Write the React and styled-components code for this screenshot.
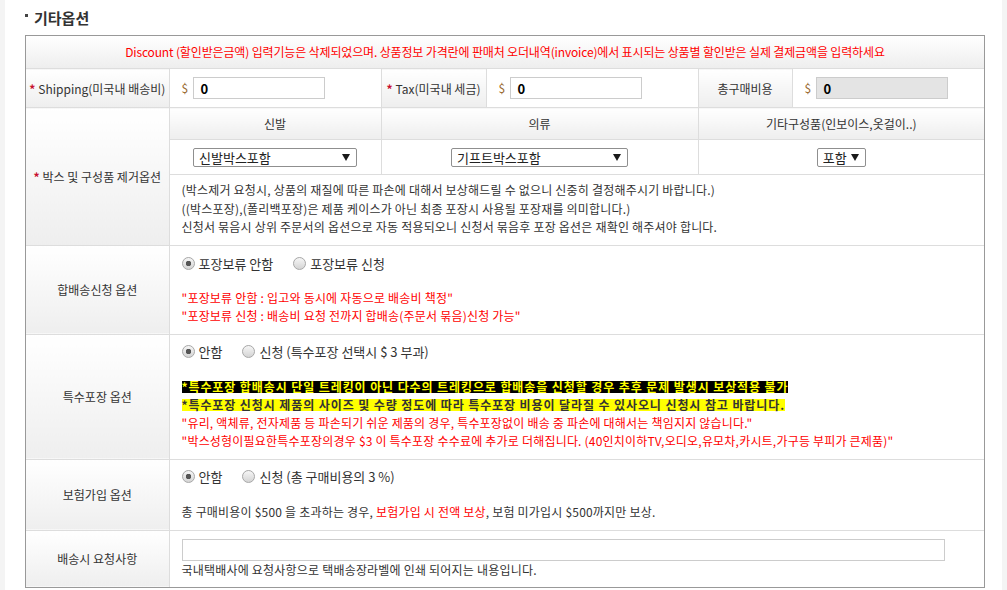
import styled, { createGlobalStyle } from "styled-components";

const GlobalStyle = createGlobalStyle`
  html, body {
    margin: 0;
    padding: 0;
    background: #fff;
  }
  body {
    font-family: "Noto Sans CJK KR", "Noto Sans", sans-serif;
    font-size: 12px;
    color: #333;
  }
`;

const Page = styled.div`
  display: flex;
  min-height: 590px;
`;

const Gutter = styled.div`
  flex: none;
  width: 5px;
  background: #f4f4f4;
`;

const Main = styled.main`
  flex: 1;
  padding: 9px 0 0 20px;
`;

const Title = styled.h3`
  margin: 0 0 9px;
  display: flex;
  align-items: center;
  gap: 6px;
  font-size: 15px;
  line-height: 17px;
  font-weight: bold;
  color: #333;

  &::before {
    content: "";
    width: 3px;
    height: 3px;
    margin-top: -4px;
    background: #444;
  }
`;

const TableBox = styled.div`
  width: 960px;
  box-sizing: border-box;
  border: 1px solid #999;
`;

const Table = styled.table`
  width: 100%;
  border-collapse: collapse;
  border-style: hidden;
  table-layout: fixed;
`;

const Label = styled.th`
  border: 1px solid #ddd;
  background: linear-gradient(#fff, #eee);
  padding: ${(p) => p.$pad || "0 2px"};
  font-weight: normal;
  font-size: 12px;
  line-height: 15px;
  text-align: center;
  vertical-align: middle;
  color: ${(p) => p.$color || "#333"};
  letter-spacing: ${(p) => p.$spacing || 0}px;
  white-space: nowrap;
`;

const Cell = styled.td`
  border: 1px solid #ddd;
  padding: ${(p) => p.$pad || "8px 12px 9px"};
  text-align: ${(p) => (p.$center ? "center" : "left")};
  vertical-align: ${(p) => (p.$middle ? "middle" : "top")};
  font-size: 12px;
  line-height: ${(p) => p.$lh || 18}px;
  letter-spacing: 0.2px;
  color: #333;
`;

const Star = styled.span`
  color: #c8102e;
  font-weight: bold;
  margin-right: 3px;
`;

const Money = styled.div`
  display: flex;
  align-items: center;
  gap: 5px;
`;

const Dollar = styled.span`
  color: #9a6b34;
  font-size: 12px;
`;

const Input = styled.input`
  box-sizing: border-box;
  width: ${(p) => p.$w || 132}px;
  height: 22px;
  margin: 0;
  padding: 0 6px;
  border: 1px solid #ccc;
  background: ${(p) => (p.disabled ? "#e4e4e4" : "#fff")};
  font: bold 13px "Noto Sans CJK KR", sans-serif;
  color: #000;
  outline: none;
`;

const WideInput = styled(Input)`
  display: block;
`;

const SelectWrap = styled.span`
  position: relative;
  display: inline-block;
  width: ${(p) => p.$w}px;
  vertical-align: top;
`;

const Select = styled.select`
  appearance: none;
  display: block;
  box-sizing: border-box;
  width: 100%;
  height: 19px;
  margin: 0;
  padding: 0 18px 0 5px;
  border: 1px solid #8f8f8f;
  border-radius: 2px;
  background: #fff;
  font: 13px "Noto Sans CJK KR", sans-serif;
  line-height: 17px;
  color: #222;
`;

const Arrow = styled.span`
  position: absolute;
  right: 7px;
  top: 6px;
  border-left: 4px solid transparent;
  border-right: 4px solid transparent;
  border-top: 7px solid #1a1a1a;
  pointer-events: none;
`;

const Line = styled.div`
  color: ${(p) => p.$color || "#333"};
  margin-top: ${(p) => p.$top || 0}px;
`;

const Red = styled.span`
  color: #f00;
`;

const Mark = styled.span`
  display: inline-block;
  line-height: 12px;
  font-weight: bold;
  letter-spacing: 0.9px;
  background: ${(p) => (p.$dark ? "#000" : "#ff0")};
  color: ${(p) => (p.$dark ? "#ff0" : "#333")};
`;

const RadioRow = styled.div`
  display: flex;
  align-items: center;
  gap: 20px;
  height: 18px;
  letter-spacing: 0;
`;

const Option = styled.label`
  display: inline-flex;
  align-items: center;
  gap: 4px;
  font-size: 13px;
  color: #333;
`;

const Radio = styled.input.attrs({ type: "radio" })`
  appearance: none;
  box-sizing: border-box;
  width: 13px;
  height: 13px;
  margin: 0;
  border: 1px solid #a8a8a8;
  border-radius: 50%;
  background: linear-gradient(#f6f6f6, #d4d4d4);

  &:checked {
    background: radial-gradient(circle, #555 0 2.5px, transparent 3px),
      linear-gradient(#f6f6f6, #d4d4d4);
  }
`;

const RadioGroup = ({ name, options }) => (
  <RadioRow>
    {options.map((o, i) => (
      <Option key={o}>
        <Radio name={name} defaultChecked={i === 0} />
        {o}
      </Option>
    ))}
  </RadioRow>
);

const Dropdown = ({ w, value }) => (
  <SelectWrap $w={w}>
    <Select defaultValue={value}>
      <option>{value}</option>
    </Select>
    <Arrow />
  </SelectWrap>
);

const MoneyCell = ({ disabled }) => (
  <Cell $pad="8px 12px" $middle>
    <Money>
      <Dollar>$</Dollar>
      <Input defaultValue="0" disabled={disabled} />
    </Money>
  </Cell>
);

export default function App() {
  return (
    <>
      <GlobalStyle />
      <Page>
        <Gutter />
        <Main>
          <Title>기타옵션</Title>
          <TableBox>
            <Table>
              <colgroup>
                <col style={{ width: 143 }} />
                <col style={{ width: 212 }} />
                <col style={{ width: 105 }} />
                <col style={{ width: 212 }} />
                <col style={{ width: 94 }} />
                <col />
              </colgroup>
              <tbody>
                <tr>
                  <Label colSpan={6} $pad="8px 0 9px" $color="#f00" $spacing={-0.15}>
                    Discount (할인받은금액) 입력기능은 삭제되었으며. 상품정보 가격란에 판매처 오더내역(invoice)에서 표시되는 상품별 할인받은 실제 결제금액을 입력하세요
                  </Label>
                </tr>
                <tr>
                  <Label>
                    <Star>*</Star>Shipping(미국내 배송비)
                  </Label>
                  <MoneyCell />
                  <Label>
                    <Star>*</Star>Tax(미국내 세금)
                  </Label>
                  <MoneyCell />
                  <Label>총구매비용</Label>
                  <MoneyCell disabled />
                </tr>
                <tr>
                  <Label rowSpan={3}>
                    <Star>*</Star>박스 및 구성품 제거옵션
                  </Label>
                  <Label $pad="8px 0">신발</Label>
                  <Label colSpan={2} $pad="8px 0">
                    의류
                  </Label>
                  <Label colSpan={2} $pad="8px 0">
                    기타구성품(인보이스,옷걸이..)
                  </Label>
                </tr>
                <tr>
                  <Cell $center $pad="8px 0 7px">
                    <Dropdown w={164} value="신발박스포함" />
                  </Cell>
                  <Cell $center colSpan={2} $pad="8px 0 7px">
                    <Dropdown w={177} value="기프트박스포함" />
                  </Cell>
                  <Cell $center colSpan={2} $pad="8px 0 7px">
                    <Dropdown w={49} value="포함" />
                  </Cell>
                </tr>
                <tr>
                  <Cell colSpan={5} $pad="6px 12px 8px" $lh={18.5}>
                    <Line>(박스제거 요청시, 상품의 재질에 따른 파손에 대해서 보상해드릴 수 없으니 신중히 결정해주시기 바랍니다.)</Line>
                    <Line>((박스포장),(폴리백포장)은 제품 케이스가 아닌 최종 포장시 사용될 포장재를 의미합니다.)</Line>
                    <Line>신청서 묶음시 상위 주문서의 옵션으로 자동 적용되오니 신청서 묶음후 포장 옵션은 재확인 해주셔야 합니다.</Line>
                  </Cell>
                </tr>
                <tr>
                  <Label>합배송신청 옵션</Label>
                  <Cell colSpan={5} $pad="9px 12px 9px">
                    <RadioGroup name="hold" options={["포장보류 안함", "포장보류 신청"]} />
                    <Line $top={16} $color="#f00">"포장보류 안함 : 입고와 동시에 자동으로 배송비 책정"</Line>
                    <Line $color="#f00">"포장보류 신청 : 배송비 요청 전까지 합배송(주문서 묶음)신청 가능"</Line>
                  </Cell>
                </tr>
                <tr>
                  <Label>특수포장 옵션</Label>
                  <Cell colSpan={5}>
                    <RadioGroup name="special" options={["안함", "신청 (특수포장 선택시 $ 3 부과)"]} />
                    <Line $top={17}>
                      <Mark $dark>*특수포장 합배송시 단일 트레킹이 아닌 다수의 트레킹으로 합배송을 신청할 경우 추후 문제 발생시 보상적용 불가</Mark>
                    </Line>
                    <Line>
                      <Mark>*특수포장 신청시 제품의 사이즈 및 수량 정도에 따라 특수포장 비용이 달라질 수 있사오니 신청시 참고 바랍니다.</Mark>
                    </Line>
                    <Line $color="#f00">"유리, 액체류, 전자제품 등 파손되기 쉬운 제품의 경우, 특수포장없이 배송 중 파손에 대해서는 책임지지 않습니다."</Line>
                    <Line $color="#f00">"박스성형이필요한특수포장의경우 $3 이 특수포장 수수료에 추가로 더해집니다. (40인치이하TV,오디오,유모차,카시트,가구등 부피가 큰제품)"</Line>
                  </Cell>
                </tr>
                <tr>
                  <Label>보험가입 옵션</Label>
                  <Cell colSpan={5}>
                    <RadioGroup name="insure" options={["안함", "신청 (총 구매비용의 3 %)"]} />
                    <Line $top={17}>
                      총 구매비용이 $500 을 초과하는 경우, <Red>보험가입 시 전액 보상</Red>, 보험 미가입시 $500까지만 보상.
                    </Line>
                  </Cell>
                </tr>
                <tr>
                  <Label>배송시 요청사항</Label>
                  <Cell colSpan={5} $pad="8px 12px">
                    <WideInput $w={763} />
                    <Line>국내택배사에 요청사항으로 택배송장라벨에 인쇄 되어지는 내용입니다.</Line>
                  </Cell>
                </tr>
              </tbody>
            </Table>
          </TableBox>
        </Main>
        <Gutter />
      </Page>
    </>
  );
}
